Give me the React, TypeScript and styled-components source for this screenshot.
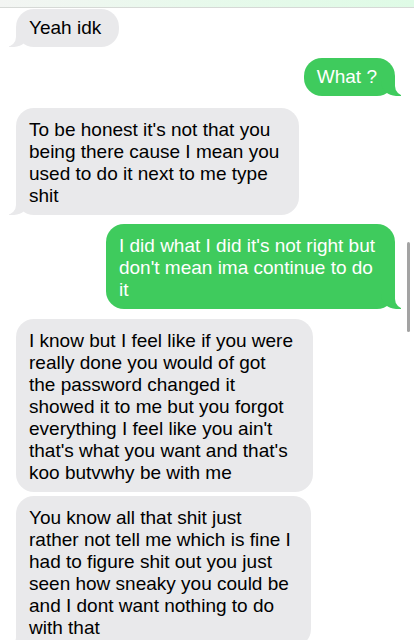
import React from "react";
import styled, { createGlobalStyle, css } from "styled-components";

const Global = createGlobalStyle`
  html, body { margin: 0; padding: 0; background: #ffffff; }
  body { font-family: "Liberation Sans", Arial, Helvetica, sans-serif; }
`;

const Screen = styled.div`
  position: relative;
  width: 414px;
  height: 640px;
  overflow: hidden;
  background: #ffffff;
  display: flex;
  flex-direction: column;
`;

const TopBar = styled.div`
  flex: none;
  height: 7px;
  border-bottom: 1px solid #d6d9d6;
  background: linear-gradient(90deg, #f3f5f3 0%, #e8f9ec 45%, #dffbe6 100%);
`;

const Thread = styled.div`
  display: flex;
  flex-direction: column;
  padding: 0 19px 0 16px;
`;

const GRAY = "#e9e9eb";
const GREEN = "#3fcb5d";

const Bubble = styled.div<{ $me?: boolean; $tail?: boolean; $multi?: boolean; $gap: number }>`
  position: relative;
  align-self: ${(p) => (p.$me ? "flex-end" : "flex-start")};
  margin-top: ${(p) => p.$gap}px;
  width: fit-content;
  box-sizing: border-box;
  padding: ${(p) => (p.$multi ? "11px 20px 8px 13px" : "8px 18px 8px 13px")};
  border-radius: 18px;
  background: ${(p) => (p.$me ? GREEN : GRAY)};
  color: ${(p) => (p.$me ? "#ffffff" : "#000000")};
  font-size: 19px;
  line-height: 22px;
  white-space: pre;
  ${(p) =>
    p.$tail &&
    (p.$me
      ? css`
          &::before {
            content: "";
            position: absolute;
            bottom: 0;
            right: -6px;
            width: 20px;
            height: 20px;
            background: ${GREEN};
            border-bottom-left-radius: 15px;
          }
          &::after {
            content: "";
            position: absolute;
            bottom: 0;
            right: -10px;
            width: 10px;
            height: 20px;
            background: #ffffff;
            border-bottom-left-radius: 10px;
          }
        `
      : css`
          &::before {
            content: "";
            position: absolute;
            bottom: 0;
            left: -7px;
            width: 20px;
            height: 20px;
            background: ${GRAY};
            border-bottom-right-radius: 15px;
          }
          &::after {
            content: "";
            position: absolute;
            bottom: 0;
            left: -10px;
            width: 10px;
            height: 20px;
            background: #ffffff;
            border-bottom-right-radius: 10px;
          }
        `)}
`;

const Text = styled.span`
  position: relative;
  z-index: 2;
`;

const ScrollThumb = styled.div`
  position: absolute;
  left: 407px;
  top: 242px;
  width: 3px;
  height: 90px;
  border-radius: 2px;
  background: #a3a3a3;
`;

type Msg = { me?: boolean; tail?: boolean; gap: number; lines: string[] };

const messages: Msg[] = [
  { gap: 1, tail: true, lines: ["Yeah idk"] },
  { gap: 11, me: true, tail: true, lines: ["What ?"] },
  {
    gap: 12,
    tail: true,
    lines: [
      "To be honest it's not that you",
      "being there cause I mean you",
      "used to do it next to me type",
      "shit",
    ],
  },
  {
    gap: 9,
    me: true,
    tail: true,
    lines: [
      "I did what I did it's not right but",
      "don't mean ima continue to do",
      "it",
    ],
  },
  {
    gap: 10,
    lines: [
      "I know but I feel like if you were",
      "really done you would of got",
      "the password changed it",
      "showed it to me but you forgot",
      "everything I feel like you ain't",
      "that's what you want and that's",
      "koo butvwhy be with me",
    ],
  },
  {
    gap: 4,
    tail: true,
    lines: [
      "You know all that shit just",
      "rather not tell me which is fine I",
      "had to figure shit out you just",
      "seen how sneaky you could be",
      "and I dont want nothing to do",
      "with that",
    ],
  },
];

export default function App() {
  return (
    <>
      <Global />
      <Screen>
        <TopBar />
        <Thread>
          {messages.map((m, i) => (
            <Bubble key={i} $me={m.me} $tail={m.tail} $multi={m.lines.length > 1} $gap={m.gap}>
              <Text>{m.lines.join("\n")}</Text>
            </Bubble>
          ))}
        </Thread>
        <ScrollThumb />
      </Screen>
    </>
  );
}
